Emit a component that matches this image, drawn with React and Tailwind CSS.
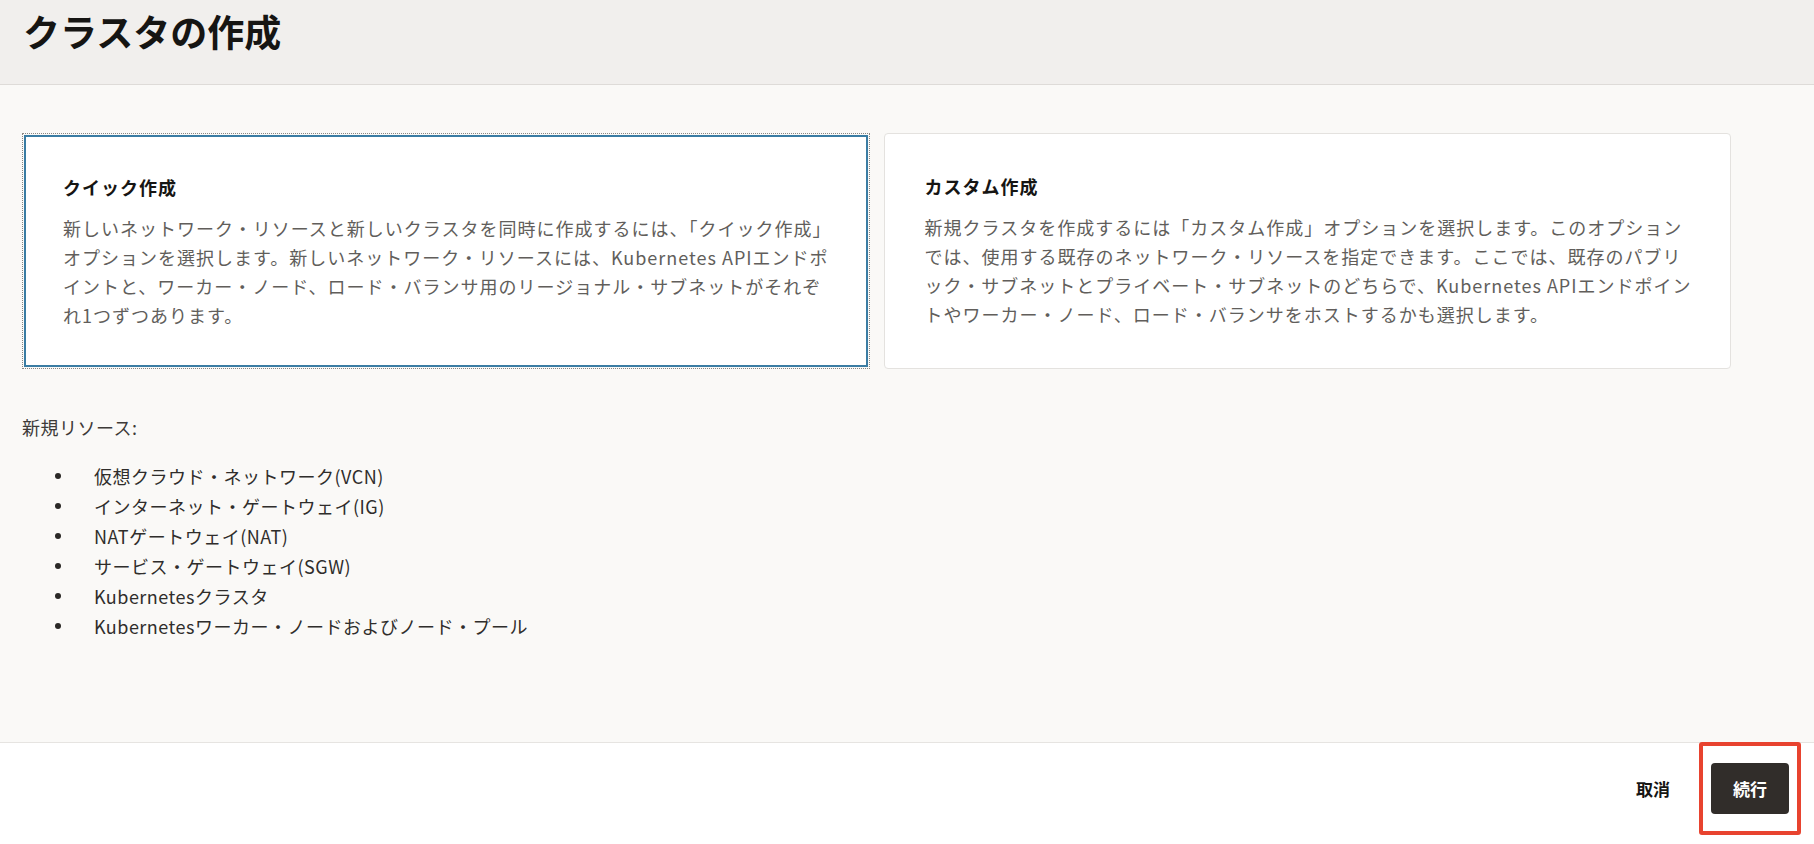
import React from 'react';

const font = { fontFamily: '"Noto Sans CJK JP", "Noto Sans", sans-serif' };

const cards = [
  {
    id: 'quick',
    title: 'クイック作成',
    lines: [
      '新しいネットワーク・リソースと新しいクラスタを同時に作成するには、「クイック作成」',
      'オプションを選択します。新しいネットワーク・リソースには、Kubernetes APIエンドポ',
      'イントと、ワーカー・ノード、ロード・バランサ用のリージョナル・サブネットがそれぞ',
      'れ1つずつあります。',
    ],
    selected: true,
  },
  {
    id: 'custom',
    title: 'カスタム作成',
    lines: [
      '新規クラスタを作成するには「カスタム作成」オプションを選択します。このオプション',
      'では、使用する既存のネットワーク・リソースを指定できます。ここでは、既存のパブリ',
      'ック・サブネットとプライベート・サブネットのどちらで、Kubernetes APIエンドポイン',
      'トやワーカー・ノード、ロード・バランサをホストするかも選択します。',
    ],
    selected: false,
  },
];

const recursos = [
  '仮想クラウド・ネットワーク(VCN)',
  'インターネット・ゲートウェイ(IG)',
  'NATゲートウェイ(NAT)',
  'サービス・ゲートウェイ(SGW)',
  'Kubernetesクラスタ',
  'Kubernetesワーカー・ノードおよびノード・プール',
];

const Card = ({ card }) => (
  <div
    className={
      card.selected
        ? 'm-[2px] bg-white border-2 border-[#3a7ca3] outline-1 outline-dotted outline-[#8a8784] outline-offset-[1px] pl-[37px] pt-[37px] pb-[35px]'
        : 'bg-white border border-[#e4e2df] rounded-[4px] pl-[40px] pt-[39px] pb-[39px]'
    }
  >
    <div className="text-[18px] leading-[27px] font-bold text-[#161513] tracking-[1px]">{card.title}</div>
    <div className="mt-[13px] text-[18px] leading-[29px] text-[#615e5b] tracking-[1px]">
      {card.lines.map((l) => (
        <div key={l} className="whitespace-nowrap">
          {l}
        </div>
      ))}
    </div>
  </div>
);

const App = () => {
  return (
    <div className="h-[844px] w-full flex flex-col bg-[#faf9f7] overflow-hidden" style={font}>
      {/* cabecera */}
      <div className="h-[85px] shrink-0 bg-[#f1efed] border-b border-[#dedbd8] pl-[23px] pt-[9px]">
        <h1 className="text-[37px] leading-[44px] font-bold text-[#161513]">クラスタの作成</h1>
      </div>

      {/* contenido */}
      <div className="flex-1 pl-[22px] pt-[48px]">
        <div className="w-[1709px] grid grid-cols-2 gap-[14px]">
          {cards.map((c) => (
            <Card key={c.id} card={c} />
          ))}
        </div>

        <div className="mt-[43px] text-[18px] leading-[30px] text-[#3d3a38] tracking-[0.5px]">新規リソース:</div>
        <ul className="mt-[19px]">
          {recursos.map((r) => (
            <li key={r} className="flex items-center h-[30px] text-[18px] text-[#2f2d2b] tracking-[0.5px]">
              <span className="ml-[33px] w-[6px] h-[6px] rounded-full bg-[#2a2826]" />
              <span className="ml-[33px] whitespace-nowrap">{r}</span>
            </li>
          ))}
        </ul>
      </div>

      {/* pie */}
      <div className="h-[102px] shrink-0 bg-white border-t border-[#e6e4e1] flex justify-end items-start pt-[20px] pr-[25px]">
        <button className="h-[51px] px-[16px] mr-[25px] text-[17px] font-bold text-[#161513]">取消</button>
        <div className="relative">
          <button className="h-[51px] w-[78px] rounded-[4px] bg-[#312d2a] text-white text-[17px] font-bold">
            続行
          </button>
          <span className="absolute -left-[12px] -right-[12px] -top-[21px] -bottom-[21px] border-4 border-[#e8432f] rounded-[3px] pointer-events-none" />
        </div>
      </div>
    </div>
  );
};

export default App;
